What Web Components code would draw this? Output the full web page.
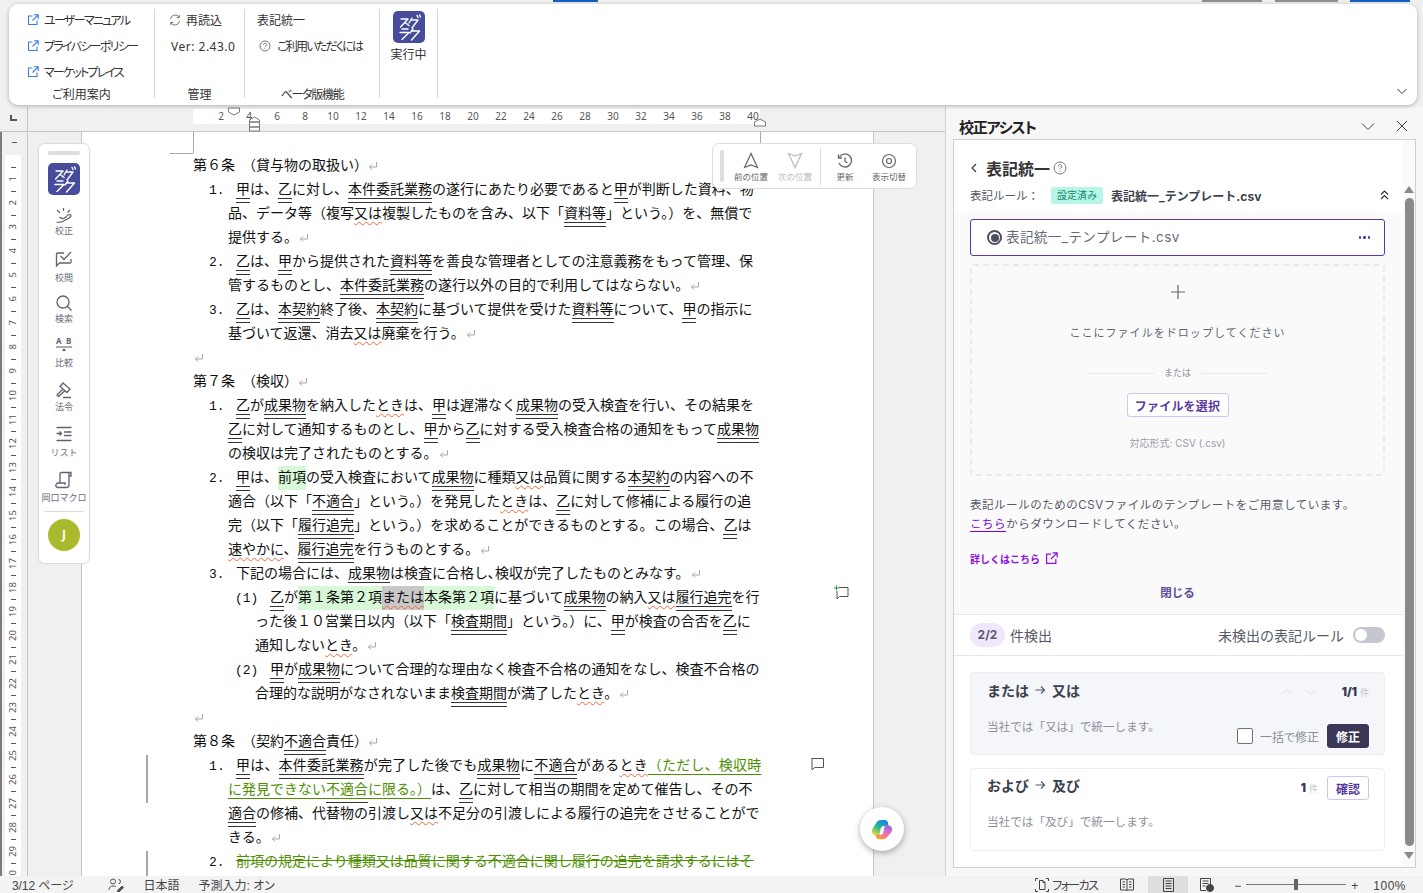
<!DOCTYPE html>
<html lang="ja">
<head>
<meta charset="utf-8">
<title>校正アシスト</title>
<style>
  html, body { margin: 0; height: 100%; overflow: hidden; background: #f0f0f0; }
  body { font-family: "Noto Sans", "Noto Sans CJK JP", sans-serif; color: #333; }
</style>
</head>
<body>
<app-shell>
  <ribbon-bar slot="top">
    <ribbon-group label="ご利用案内" style="width:146px;--pl:18px">
      <ribbon-link ext style="letter-spacing:-1.700px">ユーザーマニュアル</ribbon-link>
      <ribbon-link ext style="letter-spacing:-1.700px">プライバシーポリシー</ribbon-link>
      <ribbon-link ext style="letter-spacing:-1.800px">マーケットプレイス</ribbon-link>
    </ribbon-group>
    <ribbon-group label="管理" style="width:90px;--pl:14px">
      <ribbon-link><svg slot="icon" width="12" height="12" viewBox="0 0 12 12" fill="none" stroke="#777"><path d="M1.500 5A4.600 4.600 0 0 1 10 3.200M10.500 7A4.600 4.600 0 0 1 2 8.800"/><path d="M10.300 1v2.500H7.800M1.700 11V8.500h2.500"/></svg>再読込</ribbon-link>
      <ribbon-link plain style="letter-spacing:.5px;margin-left:2px">Ver: 2.43.0</ribbon-link>
    </ribbon-group>
    <ribbon-group label="ベータ版機能" style="width:135px;--pl:12px;--ls:-1.300px">
      <ribbon-link>表記統一</ribbon-link>
      <ribbon-link style="margin-left:2px;gap:6px;letter-spacing:-1.800px"><svg slot="icon" width="12" height="12" viewBox="0 0 12 12" fill="none" stroke="#777"><circle cx="6" cy="6" r="5"/><path d="M4.500 4.800a1.500 1.500 0 1 1 2.200 1.300c-.5.300-.7.500-.7 1.100M6 8.300v.9"/></svg>ご利用いただくには</ribbon-link>
    </ribbon-group>
    <ribbon-group style="width:58px;--pl:0px">
      <run-button>実行中</run-button>
    </ribbon-group>
  </ribbon-bar>

  <doc-area slot="doc">
    <doc-page>
      <doc-line kind="h">第６条　<h-b>（</h-b>貸与物の取扱い<h-b close>）</h-b><p-m></p-m></doc-line>
      <doc-line kind="n" num="1."><d-u>甲</d-u>は、<d-u>乙</d-u>に対し、<d-u>本件委託業務</d-u>の遂行にあたり必要であると<d-u>甲</d-u>が判断した資料、物</doc-line>
      <doc-line kind="c">品、データ等（複写<w-u>又は</w-u>複製したものを含み、以下「<d-u>資料等</d-u>」という。）を、無償で</doc-line>
      <doc-line kind="c">提供する。<p-m></p-m></doc-line>
      <doc-line kind="n" num="2."><d-u>乙</d-u>は、<d-u>甲</d-u>から提供された<d-u>資料等</d-u>を善良な管理者としての注意義務をもって管理、保</doc-line>
      <doc-line kind="c">管するものとし、<d-u>本件委託業務</d-u>の遂行以外の目的で利用してはならない。<p-m></p-m></doc-line>
      <doc-line kind="n" num="3."><d-u>乙</d-u>は、<d-u>本契約</d-u>終了後、<d-u>本契約</d-u>に基づいて提供を受けた<d-u>資料等</d-u>について、<d-u>甲</d-u>の指示に</doc-line>
      <doc-line kind="c">基づいて返還、消去<w-u>又は</w-u>廃棄を行う。<p-m></p-m></doc-line>
      <doc-line kind="h"><p-m></p-m></doc-line>
      <doc-line kind="h">第７条　<h-b>（</h-b>検収<h-b close>）</h-b><p-m></p-m></doc-line>
      <doc-line kind="n" num="1."><d-u>乙</d-u>が<d-u>成果物</d-u>を納入した<w-u>とき</w-u>は、<d-u>甲</d-u>は遅滞なく<d-u>成果物</d-u>の受入検査を行い、その結果を</doc-line>
      <doc-line kind="c"><d-u>乙</d-u>に対して通知するものとし、<d-u>甲</d-u>から<d-u>乙</d-u>に対する受入検査合格の通知をもって<d-u>成果物</d-u></doc-line>
      <doc-line kind="c">の検収は完了されたものとする。<p-m></p-m></doc-line>
      <doc-line kind="n" num="2."><d-u>甲</d-u>は、<hl-g>前項</hl-g>の受入検査において<d-u>成果物</d-u>に種類<w-u>又は</w-u>品質に関する<d-u>本契約</d-u>の内容への不</doc-line>
      <doc-line kind="c">適合（以下「<d-u>不適合</d-u>」という。）を発見した<w-u>とき</w-u>は、<d-u>乙</d-u>に対して修補による履行の追</doc-line>
      <doc-line kind="c">完（以下「<d-u>履行追完</d-u>」という。）を求めることができるものとする。この場合、<d-u>乙</d-u>は</doc-line>
      <doc-line kind="c"><w-u>速やかに</w-u>、<d-u>履行追完</d-u>を行うものとする。<p-m></p-m></doc-line>
      <doc-line kind="n" num="3.">下記の場合には、<d-u>成果物</d-u>は検査に合格し､検収が完了したものとみなす。<p-m></p-m></doc-line>
      <doc-line kind="sn" num="(1)"><d-u>乙</d-u>が<hl-g>第１条第２項</hl-g><hl-k><w-u>または</w-u></hl-k><hl-g>本条第２項</hl-g>に基づいて<d-u>成果物</d-u>の納入<w-u>又は</w-u><d-u>履行追完</d-u>を行</doc-line>
      <doc-line kind="sc">った後１０営業日以内（以下「<d-u>検査期間</d-u>」という。）に、<d-u>甲</d-u>が検査の合否を<d-u>乙</d-u>に</doc-line>
      <doc-line kind="sc">通知しない<w-u>とき</w-u>。<p-m></p-m></doc-line>
      <doc-line kind="sn" num="(2)"><d-u>甲</d-u>が<d-u>成果物</d-u>について合理的な理由なく検査不合格の通知をなし、検査不合格の</doc-line>
      <doc-line kind="sc">合理的な説明がなされないまま<d-u>検査期間</d-u>が満了した<w-u>とき</w-u>。<p-m></p-m></doc-line>
      <doc-line kind="h"><p-m></p-m></doc-line>
      <doc-line kind="h">第８条　<h-b>（</h-b>契約<d-u>不適合</d-u>責任<h-b close>）</h-b><p-m></p-m></doc-line>
      <doc-line kind="n" num="1." style="letter-spacing:.2px"><d-u>甲</d-u>は、<d-u>本件委託業務</d-u>が完了した後でも<d-u>成果物</d-u>に<d-u>不適合</d-u>がある<w-u>とき</w-u><ins-t>（ただし、検収時</ins-t></doc-line>
      <doc-line kind="c"><ins-t>に発見できない<d-u>不適合</d-u>に限る。）</ins-t>は、<d-u>乙</d-u>に対して相当の期間を定めて催告し、その不</doc-line>
      <doc-line kind="c"><d-u>適合</d-u>の修補、代替物の引渡し<w-u>又は</w-u>不足分の引渡しによる履行の追完をさせることがで</doc-line>
      <doc-line kind="c">きる。<p-m></p-m></doc-line>
      <doc-line kind="n" num="2."><del-t>前項の規定により種類又は品質に関する不適合に関し履行の追完を請求するにはそ</del-t></doc-line>
    </doc-page>
    <side-rail slot="float"></side-rail>
    <float-toolbar slot="float"></float-toolbar>
    <copilot-button slot="float"></copilot-button>
  </doc-area>

  <assist-pane slot="pane">
    <rule-card slot="cards" active style="--pt:5px;--dm:16px;--ty:0px;--cy:2px;--bm:6px" from="または" to="又は" desc="当社では「又は」で統一します。">
      <card-count slot="top" now="1/1"></card-count>
      <card-actions slot="bottom"></card-actions>
    </rule-card>
    <rule-card slot="cards" style="--pt:7px;--dm:13px;--ty:-3px;--cy:0px;--bm:0px" from="および" to="及び" desc="当社では「及び」で統一します。">
      <card-count slot="top" now="1" plain></card-count>
      <pane-button slot="top" style="margin-left:9px">確認</pane-button>
    </rule-card>
  </assist-pane>

  <status-bar slot="bottom"></status-bar>
</app-shell>

<script>
const define = (name, html, init) => {
  customElements.define(name, class extends HTMLElement {
    constructor() {
      super();
      this.attachShadow({ mode: 'open' }).innerHTML = html;
    }
    connectedCallback() {
      if (init) init(this);
    }
  });
};

const LOGO = `<svg width="32" height="32" viewBox="0 0 32 32"><rect width="32" height="32" rx="5" fill="#474b9b"/><g fill="none" stroke="#fff" stroke-width="1.400" stroke-linecap="round" stroke-linejoin="round"><path d="M8 8h7L7.500 16M12 11.500l4 3"/><path d="M19 7l-3 5M18.500 9H25l-6 8M24 4.500l1 2M26.500 4l1 2"/><path d="M9 18h6M7 21.500h9l-7 7"/><path d="M20 18l-3 4M19.500 20h7l-8 9"/></g></svg>`;

// inline marks used in the document text
define('d-u', `<style>:host{padding-bottom:5px;background:linear-gradient(#333,#333) 0 100%/100% 1px no-repeat,linear-gradient(#333,#333) 0 calc(100% - 4px)/100% 1px no-repeat}</style><slot></slot>`);
define('w-u', `<style>:host{text-decoration:underline wavy #f0693c 1px;text-underline-offset:3px;text-decoration-skip-ink:none}</style><slot></slot>`);
define('hl-g', `<style>:host{display:inline-block;height:26px;margin-bottom:-2px;background:linear-gradient(#d8f8d8,#d8f8d8) 0 2px/100% 24px no-repeat}</style><slot></slot>`);
define('hl-k', `<style>:host{display:inline-block;height:26px;margin-bottom:-2px;background:linear-gradient(#c8c8c8,#c8c8c8) 0 2px/100% 24px no-repeat}</style><slot></slot>`);
define('ins-t', `<style>:host{color:#4e8f00;text-decoration:underline #4e8f00 1px;text-underline-offset:4px;text-decoration-skip-ink:none}</style><slot></slot>`);
define('del-t', `<style>:host{color:#4e8f00;text-decoration:line-through #4e8f00 1px;text-decoration-skip-ink:none}</style><slot></slot>`);
define('h-b', `<style>:host{font-feature-settings:"halt"}:host([close]){margin-right:6px}</style><slot></slot>`);
define('p-m', `<style>:host{display:inline-block;margin-left:1px;vertical-align:-1px}svg{display:block}</style><svg width="10" height="10" viewBox="0 0 10 10" fill="none" stroke="#a8a8a8"><path d="M8.500 1v5H1.500M4 3.500L1.500 6 4 8.500"/></svg>`);

define('app-shell', `<style>
  :host{display:grid;grid-template-columns:945px 1fr;grid-template-rows:107px 769px 17px;height:893px;width:1423px;overflow:hidden}
  ::slotted([slot=top]){grid-column:1/3}
  ::slotted([slot=bottom]){grid-column:1/3}
</style><slot name="top"></slot><slot name="doc"></slot><slot name="pane"></slot><slot name="bottom"></slot>`);

define('ribbon-bar', `<style>
  :host{display:block;box-sizing:border-box;height:107px;overflow:visible;position:relative;z-index:3}
  .strip{display:flex;height:4px}
  .strip i{display:block;height:1.500px}
  .card{display:flex;box-sizing:border-box;height:101px;margin:0 6px 0 9px;padding-top:5px;background:#fff;border-radius:9px;box-shadow:0 1px 4px rgba(0,0,0,.28);position:relative}
  .more{margin:auto 9px 8px auto}
</style>
<div class="strip"><i style="margin-left:553px;width:45px;background:#1560bd"></i><i style="margin-left:604px;width:60px;background:#8f8f8f"></i><i style="margin-left:13px;width:63px;background:#8f8f8f"></i><i style="margin-left:12px;width:60px;background:#1560bd"></i></div>
<div class="card"><slot></slot>
<svg class="more" width="12" height="12" viewBox="0 0 12 12" fill="none" stroke="#333"><path d="M1.500 4l4.500 4.500L10.500 4"/></svg></div>`);

define('ribbon-group', `<style>
  :host{display:flex;flex-direction:column;box-sizing:border-box;height:89px;border-right:1px solid #d6d6d6}
  .body{height:81px;margin-top:-2px;padding-left:var(--pl);box-sizing:border-box}
  .label{height:14px;line-height:14px;margin-bottom:-4px;text-align:center;font-size:12px;color:#333;font-feature-settings:"palt";letter-spacing:var(--ls,0)}
</style><div class="body"><slot></slot></div><div class="label"></div>`, el => {
  el.shadowRoot.querySelector('.label').textContent = el.getAttribute('label') || '';
});

define('ribbon-link', `<style>
  :host{display:flex;align-items:center;gap:5px;height:26px;font-size:12px;color:#333;white-space:nowrap;font-feature-settings:"palt"}
  :host([plain]){gap:0}
  svg{flex:none}
</style><slot name="icon"></slot><slot></slot>`, el => {
  if (el.hasAttribute('ext') && !el.querySelector('svg')) {
    el.insertAdjacentHTML('afterbegin', `<svg slot="icon" width="12" height="12" viewBox="0 0 12 12" fill="none" stroke="#3b7ddd" stroke-width="1.100"><path d="M5.500 2H1.500v8.500H10V6.500M7 .8h4.200V5M11 1L5.500 6.500"/></svg>`);
  }
});

define('run-button', `<style>
  :host{display:flex;flex-direction:column;align-items:center;height:80px;padding-top:4px;box-sizing:border-box;font-size:12px;color:#333}
  .t{margin-top:4px;line-height:16px}
  svg{display:block}
</style>${LOGO}<div class="t"><slot></slot></div>`);

define('doc-area', `<style>
  :host{display:grid;grid-template-columns:28px 54px 791px 72px;grid-template-rows:25px 744px;position:relative;overflow:hidden;background:#f0f0f0}
  .hr{grid-column:1/5;display:flex;box-sizing:border-box;border-bottom:1px solid #c6c6c6;position:relative}
  .tab{width:28px;border-right:1px solid #c6c6c6;box-sizing:border-box;flex:none;position:relative}
  .tab:after{content:"";position:absolute;left:10px;top:8px;width:5px;height:4px;border-left:2px solid #555;border-bottom:2px solid #555}
  .band{display:flex;margin:2px 0 0 165px;width:567px;height:15px;background:#fff;font-size:10px;line-height:15px;color:#555}
  .band span{flex:0 0 28px;text-align:center}
  .band span:first-child{margin-left:14px}
  .mk{position:absolute}
  .vr{display:flex;flex-direction:column;align-items:stretch;overflow:hidden;border-right:1px solid #c6c6c6;box-sizing:border-box;position:relative}
  .vr:before{content:"";position:absolute;left:0;top:0;width:1.500px;height:100%;background:#7c7c7c}
  .t0{height:1px;width:5px;background:#555;margin:10px 0 12px 12px;flex:none}
  .vband{margin-left:5px;width:16px;padding-top:6px;background:#fff;flex:none}
  .vband div{height:12px;display:flex;align-items:center;justify-content:center;font-size:9.500px;color:#555}
  .vband .tk:after{content:"";display:block;width:5px;height:1px;background:#555;margin-left:0}
  .vband b{font-weight:400;writing-mode:vertical-rl;transform:rotate(180deg);line-height:12px}
  .gut{border-right:1px solid #c6c6c6;box-sizing:border-box}
  .rg{border-left:1px solid #c6c6c6;box-sizing:border-box}
</style>
<div class="hr">
  <div class="tab"></div>
  <div class="band"></div>
  <svg class="mk" style="left:227px;top:0" width="14" height="10" viewBox="0 0 14 10" fill="#fff" stroke="#777"><path d="M1.500 1h11v4l-5.500 3-5.500-3z"/></svg>
  <svg class="mk" style="left:248px;top:6px" width="13" height="19" viewBox="0 0 13 19" fill="#fff" stroke="#777"><path d="M1.500 9V7l5-3 5 3v2zM1.500 9h10v5h-10zM1.500 14h10v4h-10z"/></svg>
  <svg class="mk" style="left:753px;top:11px" width="14" height="9" viewBox="0 0 14 9" fill="#fff" stroke="#777"><path d="M1.500 8V4L7 1l5.500 3v4z"/></svg>
</div>
<div class="vr"><div class="t0"></div><div class="vband"></div></div>
<div class="gut"></div>
<slot></slot>
<div class="rg"></div>
<slot name="float"></slot>`, el => {
  const band = el.shadowRoot.querySelector('.band');
  for (let n = 2; n <= 40; n += 2) band.insertAdjacentHTML('beforeend', `<span>${n}</span>`);
  const vb = el.shadowRoot.querySelector('.vband');
  for (let n = 1; n <= 30; n++) vb.insertAdjacentHTML('beforeend', `<div class="tk"></div><div><b>${n}</b></div>`);
});

define('doc-page', `<style>
  :host{display:block;background:#fff;overflow:hidden;position:relative;font-size:14px;color:#111;padding:20px 0 0 111px;box-sizing:border-box;font-family:"Noto Sans CJK JP",sans-serif}
  .c1{position:absolute;left:88px;top:21px;width:23px;height:1px;background:#a8a8a8}
  .c2{position:absolute;left:111px;top:0;width:1px;height:21px;background:#a8a8a8}
  .c3{position:absolute;left:678px;top:0;width:1px;height:21px;background:#a8a8a8}
  .bar{position:absolute;left:64px;width:2px;background:#a8a8a8}
  .cm{position:absolute}
</style>
<div class="c1"></div><div class="c2"></div><div class="c3"></div>
<div class="bar" style="top:623px;height:48px"></div>
<div class="bar" style="top:719px;height:26px"></div>
<svg class="cm" style="left:751px;top:453px" width="16" height="16" viewBox="0 0 16 16" fill="none" stroke="#555"><path d="M6 2.500h9v9H6.500L4 14v-8"/><path d="M1 3h5M3.500 .5v5" stroke="#2a9a3a"/></svg>
<svg class="cm" style="left:727px;top:624px" width="16" height="16" viewBox="0 0 16 16" fill="none" stroke="#555"><path d="M2.500 2.500h12v9H5.500L3 14V2.500"/></svg>
<slot></slot>`);

define('doc-line', `<style>
  :host{display:block;height:24px;line-height:24px;white-space:nowrap}
  :host([kind=n]){padding-left:16px}
  :host([kind=c]){padding-left:35px}
  :host([kind=sn]){padding-left:42px}
  :host([kind=sc]){padding-left:62px}
  .num{display:none;font-family:"Liberation Mono",monospace;font-size:13px}
  :host([kind=n]) .num{display:inline-block;width:27px}
  :host([kind=sn]) .num{display:inline-block;width:35px}
</style><span class="num"></span><slot></slot>`, el => {
  el.shadowRoot.querySelector('.num').textContent = el.getAttribute('num') || '';
});

define('rail-item', `<style>
  :host{display:flex;flex-direction:column;align-items:center;margin-top:var(--mt);color:#5e6374}
  .i{height:20px;display:flex;align-items:center;justify-content:center}
  .l{margin-top:var(--gap);height:12px;line-height:12px;font-size:9px;color:#666b7a;white-space:nowrap}
</style><div class="i"><slot></slot></div><div class="l"></div>`, el => {
  el.shadowRoot.querySelector('.l').textContent = el.getAttribute('label');
});

define('side-rail', `<style>
  :host{position:absolute;left:38px;top:36px;width:52px;height:421px;box-sizing:border-box;background:#fff;border:1px solid #dcdcdf;border-radius:7px;display:flex;flex-direction:column;align-items:center;padding-top:7px;font-family:"Noto Sans CJK JP",sans-serif;box-shadow:0 0 2px rgba(0,0,0,.06)}
  .h{width:32px;height:4px;border-radius:2px;background:#dcdde0;flex:none}
  .logo{margin-top:8px;height:32px}
  .sep{width:40px;height:1px;background:#dcdde0;margin-top:7px;flex:none}
  .av{width:32px;height:32px;margin-top:7px;border-radius:50%;background:#a9ba2d;color:#fff;font:700 12px/32px "Noto Sans",sans-serif;text-align:center;flex:none}
</style>
<div class="h"></div>
<div class="logo">${LOGO}</div>
<rail-item label="校正" style="--mt:11px;--gap:-1px"><svg width="20" height="18" viewBox="0 0 20 18" fill="none" stroke="currentColor" stroke-width="1.200"><path d="M3 3l3 3M9.500 1v3M16 3l-2.500 2.500"/><path d="M2.500 15c3 1 6 0 9-2 2-1.500 5-2 5.500-4 .2-1.500-1.500-2-3-1-2 1-2 3-4.500 3.500-1.500.3-3-.5-4-1.500"/></svg></rail-item>
<rail-item label="校閲" style="--mt:12px;--gap:3px"><svg width="18" height="18" viewBox="0 0 18 18" fill="none" stroke="currentColor" stroke-width="1.300"><path d="M9 3H2.500A1 1 0 0 0 1.500 4v12l3-3h10.500a1 1 0 0 0 1-1V9"/><path d="M5.500 6l3.500 3.500L16 2"/></svg></rail-item>
<rail-item label="検索" style="--mt:9px;--gap:0px"><svg width="18" height="18" viewBox="0 0 18 18" fill="none" stroke="currentColor" stroke-width="1.300"><circle cx="8" cy="8" r="6"/><path d="M12.500 12.500L16.500 16.500"/></svg></rail-item>
<rail-item label="比較" style="--mt:10px;--gap:2px"><svg width="18" height="18" viewBox="0 0 18 18" fill="currentColor"><text x="1" y="8" font-size="8" font-weight="700" font-family="Noto Sans">A</text><text x="11" y="8" font-size="8" font-weight="700" font-family="Noto Sans">B</text><path d="M1 10.500h16v1H1zM7 15l2-3 2 3z"/></svg></rail-item>
<rail-item label="法令" style="--mt:11px;--gap:1px"><svg width="18" height="18" viewBox="0 0 18 18" fill="none" stroke="currentColor" stroke-width="1.300"><path d="M8 2l7 6-3 3.500-7-6zM7.500 8.500L2 14l1.500 1.500L9.500 10M8 16.500h8"/></svg></rail-item>
<rail-item label="リスト" style="--mt:11px;--gap:3px"><svg width="18" height="16" viewBox="0 0 18 16" fill="none" stroke="currentColor" stroke-width="1.300"><path d="M1.500 1.500h15M1.500 14.500h15M9 6h7.500M9 9.500h7.500M1.500 7.500h5M4.500 5.500l2 2-2 2"/></svg></rail-item>
<rail-item label="岡口マクロ" style="--mt:11px;--gap:2px"><svg width="18" height="18" viewBox="0 0 18 18" fill="none" stroke="currentColor" stroke-width="1.300"><path d="M5 12V3a1.500 1.500 0 0 1 1.500-1.500H16V5h-2M14 2v12a2.500 2.500 0 0 1-2.500 2.500H3A2 2 0 0 1 1.500 13 1.500 1.500 0 0 1 3 12h7v2"/></svg></rail-item>
<div class="sep"></div>
<div class="av">J</div>`);

define('tool-btn', `<style>
  :host{display:flex;flex-direction:column;align-items:center;width:44px;color:#666}
  :host([off]){color:#bbb}
  .i{height:21px;display:flex;align-items:center}
  .l{font-size:8.500px;line-height:12px;margin-top:-1px;white-space:nowrap}
</style><div class="i"><slot></slot></div><div class="l"></div>`, el => {
  el.shadowRoot.querySelector('.l').textContent = el.getAttribute('label');
});

define('float-toolbar', `<style>
  :host{position:absolute;left:712px;top:36px;width:205px;height:46px;box-sizing:border-box;background:#fff;border:1px solid #dcdcdf;border-radius:7px;display:flex;align-items:center;padding:0 0 0 7px;font-family:"Noto Sans CJK JP",sans-serif}
  .h{width:4px;height:32px;border-radius:2px;background:#dcdde0;margin-right:5px}
  .sep{width:1px;height:37px;background:#dcdcdf;margin:0 2px 0 3px}
</style>
<div class="h"></div>
<tool-btn label="前の位置"><svg width="16" height="17" viewBox="0 0 16 17" fill="none" stroke="currentColor" stroke-width="1.200"><path d="M8 1.500L1.500 15.500 8 13l6.500 2.500z"/></svg></tool-btn>
<tool-btn label="次の位置" off><svg width="16" height="17" viewBox="0 0 16 17" fill="none" stroke="currentColor" stroke-width="1.200"><path d="M8 15.500L1.500 1.500 8 4l6.500-2.500z"/></svg></tool-btn>
<div class="sep"></div>
<tool-btn label="更新"><svg width="16" height="16" viewBox="0 0 16 16" fill="none" stroke="currentColor" stroke-width="1.300"><path d="M2.500 4A6.500 6.500 0 1 1 2 10"/><path d="M1.500 1.500v3.500h3.500M8 4.500V8.500l2.500 1.500"/></svg></tool-btn>
<tool-btn label="表示切替"><svg width="16" height="16" viewBox="0 0 16 16" fill="none" stroke="currentColor" stroke-width="1.200"><circle cx="8" cy="8" r="6.500"/><circle cx="8" cy="8" r="2.500"/></svg></tool-btn>`);

define('copilot-button', `<style>
  :host{position:absolute;left:860px;top:700px;width:44px;height:44px;border-radius:50%;background:#fff;box-shadow:0 2px 6px rgba(0,0,0,.32);display:flex;align-items:center;justify-content:center}
</style>
<svg width="22" height="21" viewBox="0 0 24 24" preserveAspectRatio="none">
  <defs>
    <linearGradient id="a" x1="0.700" y1="0" x2="0.200" y2="1"><stop offset="0" stop-color="#1b7fe8"/><stop offset=".5" stop-color="#22bb8a"/><stop offset="1" stop-color="#f6dc3a"/></linearGradient>
    <linearGradient id="b" x1="0.800" y1="0" x2="0.300" y2="1"><stop offset="0" stop-color="#8a6cf0"/><stop offset=".55" stop-color="#ee6cb8"/><stop offset="1" stop-color="#fa9a36"/></linearGradient>
  </defs>
  <path fill="url(#a)" d="M11 1h4c2 0 3 1 3.500 3L19 8h-5c-2 0-3 1-3.500 3L9 19H6c-3 0-5-2-5-5 0-1 .3-2 .8-3L6 4c1-2 3-3 5-3z"/>
  <path fill="url(#b)" d="M13 23H9c-2 0-3-1-3.500-3L5 18h5c2 0 3-1 3.500-3L15 7h3c3 0 5 2 5 5 0 1-.3 2-.8 3L18 20c-1 2-3 3-5 3z"/>
</svg>`);

define('pane-button', `<style>
  :host{display:inline-flex;align-items:center;justify-content:center;box-sizing:border-box;height:24px;width:42px;border:1px solid #cfc6ee;border-radius:3px;background:#fff;color:#5a3aa0;font-size:12px;font-weight:700}
  :host([dark]){background:#3c3757;border-color:#3c3757;color:#fff}
</style><slot></slot>`);

define('card-count', `<style>
  :host{display:inline-flex;align-items:baseline;font-size:11.500px;font-weight:700;color:#333a4d;font-family:Inter,"Noto Sans CJK JP",sans-serif;transform:translateY(var(--cy,0))}
  span{font-size:9px;font-weight:400;color:#c5c5c5;margin-left:3px}
  svg{align-self:center}
</style><slot></slot><b></b><span>件</span>`, el => {
  el.shadowRoot.querySelector('b').textContent = el.getAttribute('now');
  if (!el.hasAttribute('plain')) {
    el.shadowRoot.querySelector('b').insertAdjacentHTML('beforebegin', `<svg width="12" height="8" viewBox="0 0 12 8" fill="none" stroke="#e0e0e6" style="margin-right:12px"><path d="M1 6.500l5-5 5 5"/></svg><svg width="12" height="8" viewBox="0 0 12 8" fill="none" stroke="#e0e0e6" style="margin-right:25px"><path d="M1 1.500l5 5 5-5"/></svg>`);
  }
});

define('card-actions', `<style>
  :host{display:flex;align-items:center;font-size:12px;color:#8a8c95}
  .c{width:16px;height:16px;border:1px solid #70717c;border-radius:2px;background:#fff;box-sizing:border-box;margin-right:7px}
  .t{margin-right:8px;font-feature-settings:"palt"}
</style><div class="c"></div><div class="t">一括で修正</div><pane-button dark>修正</pane-button>`);

define('rule-card', `<style>
  :host{display:block;box-sizing:border-box;height:83px;border:1px solid #ececf2;border-radius:4px;background:#fff;padding:var(--pt) 15px 0 16px}
  :host([active]){background:#f5f6fa}
  .top{display:flex;align-items:center;justify-content:space-between;height:24px}
  .ti{font-size:14px;font-weight:700;color:#3c3f4c;transform:translateY(var(--ty));display:flex;align-items:center}
  .ti svg{margin:0 6px 0 6px}
  .r{display:flex;align-items:center}
  .bot{display:flex;justify-content:space-between;align-items:flex-start;margin-top:var(--dm)}
  .d{font-size:11.600px;line-height:18px;color:#8d8f99}
  .bw{margin-top:var(--bm)}
</style>
<div class="top"><div class="ti"><span class="f"></span><svg width="11" height="10" viewBox="0 0 11 10" fill="none" stroke="#555a66" stroke-width="1.200"><path d="M.5 5h9M6 1.500L9.500 5 6 8.500"/></svg><span class="o"></span></div><div class="r"><slot name="top"></slot></div></div>
<div class="bot"><div class="d"></div><div class="bw"><slot name="bottom"></slot></div></div>`, el => {
  const s = el.shadowRoot;
  s.querySelector('.f').textContent = el.getAttribute('from');
  s.querySelector('.o').textContent = el.getAttribute('to');
  s.querySelector('.d').textContent = el.getAttribute('desc');
});

define('assist-pane', `<style>
  :host{display:flex;flex-direction:column;background:#f7f7f7;border-left:1px solid #d4d4d4;box-sizing:border-box;font-family:Inter,"Noto Sans CJK JP",sans-serif;color:#555a66;position:relative}
  .tb{display:flex;align-items:center;height:32px;padding:6px 15px 0 13px;box-sizing:border-box;flex:none}
  .tb h1{margin:0;font-size:15px;font-weight:700;color:#222;flex:1;font-feature-settings:"palt";letter-spacing:-1.200px}
  .tb svg{margin-left:21px}
  .panel{flex:none;display:flex;height:729px;margin:0 7px 0 7px;box-sizing:border-box;border:1px solid #d0d0d0;background:#fff}
  .col{width:449px;flex:none;display:flex;flex-direction:column;overflow:hidden}
  .sb{flex:1;display:flex;flex-direction:column;align-items:center;background:#fafafa;padding-top:46px}
  .sb i{display:block;width:0;height:0;border:5px solid transparent;flex:none}
  .up{border-bottom:7px solid #8a8a8a !important;border-top:0 !important}
  .dn{border-top:7px solid #8a8a8a !important;border-bottom:0 !important}
  .th{width:9px;height:648px;background:#8a8a8a;border-radius:5px;margin:5px 0 6px}
  .hd{height:72px;padding:17px 18px 0 16px;box-sizing:border-box;flex:none;background:#fff}
  .r1{display:flex;align-items:center;height:22px}
  .r1 b{font-size:16px;color:#333;margin:0 3px 0 8px}
  .r2{display:flex;align-items:center;height:18px;margin-top:7px;font-size:11.500px}
  .bd{font-size:10px;height:17px;line-height:17px;background:#b7f5e6;color:#0c8a68;padding:0 6px;border-radius:3px;margin:0 8px 0 12px}
  .fn{font-weight:700;color:#3c3f4c;flex:1;font-size:12px}
  .body{flex:none;height:403px;background:#fafafb;padding:7px 18px 0 16px;box-sizing:border-box;border-bottom:1px solid #e8e8ec}
  .sel{display:flex;align-items:center;height:37px;box-sizing:border-box;border:1px solid #5a35a5;border-radius:3px;background:#fff;padding:0 14px 4px 16px;font-size:13.500px;letter-spacing:.45px;color:#666a76}
  .rd{width:15px;height:15px;box-sizing:border-box;border:2px solid #4b4f60;border-radius:50%;margin:4px 4px 0 0;display:flex;align-items:center;justify-content:center}
  .rd:after{content:"";width:8px;height:8px;background:#4b4f60;border-radius:50%}
  .sel span{flex:1}
  .dots{display:flex;gap:2px;margin-top:4px}
  .dots u{width:2.500px;height:2.500px;border-radius:50%;background:#5a35a5}
  .drop{height:212px;margin-top:8px;box-sizing:border-box;border:2px dashed #e9e9ef;border-radius:3px;display:flex;flex-direction:column;align-items:center;padding-top:18px}
  .hint{margin-top:25px;font-size:11px;line-height:16px;letter-spacing:1.050px;color:#63666f}
  .or{display:flex;align-items:center;margin-top:26px;font-size:9px;line-height:12px;color:#8d8f99}
  .or u{width:67px;height:1px;background:#e8e8ee;margin:0 10px}
  .pick{margin-top:14px;width:102px;height:24px;box-sizing:border-box;border:1px solid #cfc6ee;border-radius:3px;background:#fff;color:#5a3aa0;font-size:12px;letter-spacing:.2px;font-weight:700;display:flex;align-items:center;justify-content:center}
  .fm{margin-top:19px;font-size:10px;line-height:14px;color:#9a9ca5}
  p{margin:20px 0 0;font-size:11.500px;line-height:19px;color:#555a66;letter-spacing:.54px}
  p a{color:#7d00e0;text-decoration:underline;text-underline-offset:3px}
  .more{display:flex;align-items:center;gap:5px;height:17px;margin-top:16px;font-size:10px;font-weight:700;color:#8a0ce6}
  .close{height:20px;line-height:20px;margin-top:16px;text-align:center;font-size:11.500px;font-weight:700;color:#5d4a92}
  .cnt{display:flex;align-items:center;height:41px;padding:0 18px 0 16px;box-sizing:border-box;border-bottom:1px solid #e8e8ec;flex:none;background:#fff;font-size:14px}
  .pill{width:35px;height:24px;line-height:24px;border-radius:12px;background:#f1e7fd;text-align:center;font-size:12px;font-weight:700;color:#5c5a70;margin-right:5px}
  .sp{flex:1}
  .tg{width:32px;height:16px;border-radius:8px;background:#c5c7d0;margin-left:9px;display:flex;align-items:center;padding-left:2px;box-sizing:border-box}
  .tg:before{content:"";width:12px;height:12px;border-radius:50%;background:#fff}
  .cards{display:flex;flex-direction:column;gap:13px;padding:16px 18px 0 16px;background:#fff;flex:1}
</style>
<div class="tb"><h1>校正アシスト</h1>
  <svg width="14" height="14" viewBox="0 0 14 14" fill="none" stroke="#444"><path d="M1 4.500l6 6 6-6"/></svg>
  <svg width="12" height="12" viewBox="0 0 12 12" fill="none" stroke="#444"><path d="M1 1l10 10M11 1L1 11"/></svg>
</div>
<div class="panel">
  <div class="col">
    <div class="hd">
      <div class="r1"><svg width="8" height="10" viewBox="0 0 8 10" fill="none" stroke="#444" stroke-width="1.300"><path d="M6 1L2 5l4 4"/></svg><b>表記統一</b><svg width="14" height="14" viewBox="0 0 14 14" fill="none" stroke="#777"><circle cx="7" cy="7" r="6"/><path d="M5.200 5.500a1.800 1.800 0 1 1 2.700 1.500c-.6.400-.9.700-.9 1.300M7 9.500v1"/></svg></div>
      <div class="r2">表記ルール：<span class="bd">設定済み</span><span class="fn">表記統一_テンプレート.csv</span><svg width="9" height="10" viewBox="0 0 9 10" fill="none" stroke="#333" stroke-width="1.200" style="margin-right:-4px"><path d="M1 4.500L4.500 1 8 4.500M1 9L4.500 5.500 8 9"/></svg></div>
    </div>
    <div class="body">
      <div class="sel"><div class="rd"></div><span>表記統一_テンプレート.csv</span><div class="dots"><u></u><u></u><u></u></div></div>
      <div class="drop">
        <svg width="16" height="16" viewBox="0 0 16 16" stroke="#666" stroke-width="1.200"><path d="M8 1v14M1 8h14"/></svg>
        <div class="hint">ここにファイルをドロップしてください</div>
        <div class="or"><u></u>または<u></u></div>
        <div class="pick">ファイルを選択</div>
        <div class="fm">対応形式: CSV (.csv)</div>
      </div>
      <p>表記ルールのためのCSVファイルのテンプレートをご用意しています。<br><a>こちら</a>からダウンロードしてください。</p>
      <div class="more">詳しくはこちら <svg width="13" height="13" viewBox="0 0 12 12" fill="none" stroke="#8a0ce6" stroke-width="1.100"><path d="M5.500 2H1.500v8.500H10V6.500M7 .8h4.200V5M11 1L5.500 6.500"/></svg></div>
      <div class="close">閉じる</div>
    </div>
    <div class="cnt"><span class="pill">2/2</span>件検出<span class="sp"></span>未検出の表記ルール<div class="tg"></div></div>
    <div class="cards"><slot name="cards"></slot></div>
  </div>
  <div class="sb"><i class="up"></i><div class="th"></div><i class="dn"></i></div>
</div>`);

define('status-bar', `<style>
  :host{display:flex;align-items:center;box-sizing:border-box;height:17px;background:#f3f3f3;font-family:"Liberation Sans","Noto Sans CJK JP",sans-serif;font-size:12px;line-height:14px;color:#444;white-space:nowrap;position:relative;z-index:2;font-feature-settings:"palt"}
  svg{display:block;flex:none}
  .on{display:flex;align-items:center;justify-content:center;width:40px;height:17px;background:#dedede}
  .tr{width:100px;height:1px;background:#777;margin:0 5px;display:flex;align-items:center;justify-content:center}
  .tr:after{content:"";width:4px;height:11px;background:#666;flex:none}
  span.t{padding-top:3px}
</style>
<span class="t" style="margin-left:12px;letter-spacing:-.1px">3/12 ページ</span>
<svg style="margin-left:35px" width="16" height="14" viewBox="0 0 16 14" fill="none" stroke="#555"><circle cx="5" cy="3.500" r="2.500"/><path d="M1 12c0-3 2-4 4-4s3 .5 3 1M10.500 5.500a2 2 0 1 0 0-4"/><path d="M9 13l5-5 1.500 1.500-5 5z" fill="#555"/></svg>
<span class="t" style="margin-left:19px">日本語</span>
<span class="t" style="margin-left:19px">予測入力: オン</span>
<span style="flex:1"></span>
<svg width="14" height="14" viewBox="0 0 14 14" fill="none" stroke="#444"><path d="M.5 3V.5H3M11 .5h2.500V3M.5 11v2.500H3M11 13.500h2.500V11M4.500 11.500v-9h3.500l2 2v7zM8 2.500v2h2"/></svg>
<span class="t" style="margin-left:3px;letter-spacing:-1.600px">フォーカス</span>
<svg style="margin-left:23px" width="14" height="13" viewBox="0 0 14 13" fill="none" stroke="#444"><path d="M.5 1h5.500L7 2l1-1h5.500v11H8l-1 .5L6 12H.5zM7 2v10M2.500 4h2.500M2.500 6.500h2.500M2.500 9h2.500M9 4h2.500M9 6.500h2.500M9 9h2.500"/></svg>
<div class="on" style="margin-left:14px"><svg width="11" height="14" viewBox="0 0 11 14" fill="none" stroke="#444"><path d="M.5.500h10v13H.5zM2.500 3h6M2.500 5.500h6M2.500 8h6M2.500 10.500h6"/></svg></div>
<svg style="margin-left:12px" width="14" height="14" viewBox="0 0 14 14" fill="none" stroke="#444"><path d="M.5.500h10v7M.5.500v12H6M2.500 3h6M2.500 5.500h6M2.500 8h3"/><circle cx="10" cy="10" r="3.500" fill="#444"/></svg>
<span class="t" style="margin-left:20px">−</span>
<div class="tr"></div>
<span class="t">+</span>
<span class="t" style="margin-left:15px;margin-right:17px;letter-spacing:.5px">100%</span>`);
</script>
</body>
</html>
